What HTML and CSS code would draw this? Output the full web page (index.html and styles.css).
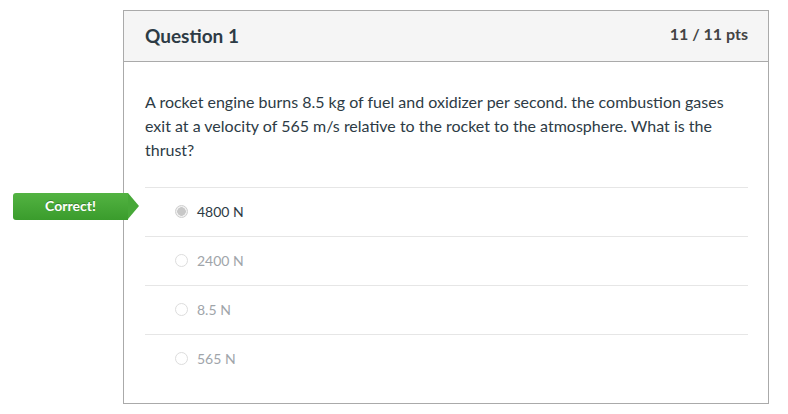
FILE: index.html
```html
<!DOCTYPE html>
<html lang="en">
<head>
    <meta charset="UTF-8">
    <title>Quiz Results</title>
    <link rel="stylesheet" href="styles.css">
</head>
<body>
    <div class="page">
        <div class="question">
            <div class="question-header">
                <h2>Question 1</h2>
                <span class="pts">11 / 11 pts</span>
            </div>
            <div class="question-body">
                <p class="question-text">A rocket engine burns 8.5 kg of fuel and oxidizer per second. the combustion gases exit at a velocity of 565 m/s relative to the rocket to the atmosphere. What is the thrust?</p>
                <div class="answers">
                    <div class="answer selected">
                        <span class="correct-flag">Correct!</span>
                        <span class="radio"></span>
                        <span class="answer-text">4800 N</span>
                    </div>
                    <div class="answer">
                        <span class="radio"></span>
                        <span class="answer-text">2400 N</span>
                    </div>
                    <div class="answer">
                        <span class="radio"></span>
                        <span class="answer-text">8.5 N</span>
                    </div>
                    <div class="answer last">
                        <span class="radio"></span>
                        <span class="answer-text">565 N</span>
                    </div>
                </div>
            </div>
        </div>
    </div>
</body>
</html>
```

FILE: styles.css
```css
body {
    margin: 0;
    background-color: #fff;
    color: #2d3b45;
    font-family: Lato, "Open Sans", sans-serif;
}

.page {
    padding: 10px 0 0 123px;
}

.question {
    width: 644px;
    border: 1px solid #aaa;
    height: 392px;
}

.question-header {
    display: flex;
    justify-content: space-between;
    align-items: flex-start;
    height: 50px;
    background-color: #f5f5f5;
    border-bottom: 1px solid #aaa;
    padding: 0 20px 0 21px;
}

.question-header h2 {
    margin: 0;
    padding-top: 13px;
    font-size: 19px;
    font-weight: 700;
    color: #2d3b45;
}

.pts {
    padding-top: 13px;
    font-size: 16px;
    font-weight: 700;
    color: #444;
}

.question-body {
    padding: 0 20px 0 21px;
}

.question-text {
    margin: 0;
    padding: 28px 0 25px;
    font-size: 16px;
    line-height: 24px;
    color: #2d3b45;
}

.answer {
    position: relative;
    display: flex;
    align-items: center;
    gap: 9px;
    height: 49px;
    border-top: 1px solid #e6e6e6;
    padding-left: 30px;
    padding-bottom: 2px;
    box-sizing: border-box;
    font-size: 14px;
    color: #a0a5aa;
}

.answer.selected {
    color: #2d3b45;
}

.radio {
    width: 11px;
    height: 11px;
    border: 1px solid #ddd;
    border-radius: 50%;
    background: #fff;
    box-sizing: content-box;
}

.selected .radio {
    background: radial-gradient(circle, #c8c8c8 0 4px, #f0f0f0 4.5px);
    border-color: #cfcfcf;
}

.correct-flag {
    position: absolute;
    left: -132px;
    top: 5px;
    width: 115px;
    height: 27px;
    line-height: 26px;
    text-align: center;
    color: #fff;
    font-size: 14px;
    font-weight: 700;
    background: linear-gradient(#53b342, #3a9c2c);
    border-radius: 3px 0 0 3px;
    text-shadow: 0 -1px 0 rgba(0, 0, 0, 0.25);
}

.correct-flag::after {
    content: "";
    position: absolute;
    right: -11px;
    top: 0;
    border-top: 13.5px solid transparent;
    border-bottom: 13.5px solid transparent;
    border-left: 11px solid #47a838;
}
```
